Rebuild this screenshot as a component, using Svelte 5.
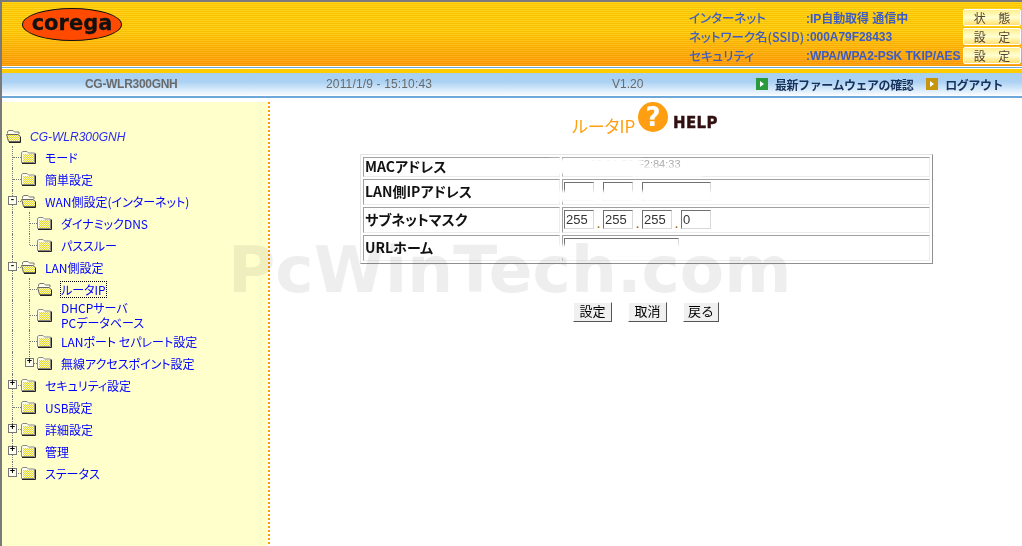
<script>
  const rows = [
    { lv: -1, label: 'CG-WLR300GNH', open: true, root: true },
    { lv: 0, label: 'モード' },
    { lv: 0, label: '簡単設定' },
    { lv: 0, label: 'WAN側設定(インターネット)', box: '-', open: true },
    { lv: 1, label: 'ダイナミックDNS' },
    { lv: 1, label: 'パススルー', lastInGroup: true },
    { lv: 0, label: 'LAN側設定', box: '-', open: true },
    { lv: 1, label: 'ルータIP', open: true, sel: true },
    { lv: 1, label: 'DHCPサーバ\nPCデータベース', tall: true },
    { lv: 1, label: 'LANポート セパレート設定' },
    { lv: 1, label: '無線アクセスポイント設定', box: '+', lastInGroup: true },
    { lv: 0, label: 'セキュリティ設定', box: '+' },
    { lv: 0, label: 'USB設定' },
    { lv: 0, label: '詳細設定', box: '+' },
    { lv: 0, label: '管理', box: '+' },
    { lv: 0, label: 'ステータス', box: '+', last: true }
  ];
  const status = [
    ['インターネット', ':IP自動取得 通信中', '状 態'],
    ['ネットワーク名(SSID)', ':000A79F28433', '設 定'],
    ['セキュリティ', ':WPA/WPA2-PSK TKIP/AES', '設 定']
  ];
</script>

<svg class="defs" width="0" height="0" aria-hidden="true">
  <defs>
    <pattern id="dither" width="2" height="2" patternUnits="userSpaceOnUse">
      <rect width="2" height="2" fill="#fdfbc0" />
      <rect width="1" height="1" fill="#e4d830" />
      <rect x="1" y="1" width="1" height="1" fill="#e4d830" />
    </pattern>
  </defs>
</svg>

<div class="page">
  <header class="head">
    <div class="logo"><span>corega</span></div>
    <div class="status">
      {#each status as s}
        <div class="stat-row">
          <span class="k">{s[0]}</span>
          <span class="v">{s[1]}</span>
          <span class="sbtn">{s[2]}</span>
        </div>
      {/each}
    </div>
  </header>
  <div class="rule"></div>
  <div class="bar">
    <span class="model">CG-WLR300GNH</span>
    <span class="date">2011/1/9 - 15:10:43</span>
    <span class="ver">V1.20</span>
    <span class="link first"><i class="arrow green"></i>最新ファームウェアの確認</span>
    <span class="link"><i class="arrow gold"></i>ログアウト</span>
  </div>
  <div class="bar-end"></div>

  <div class="body">
    <aside class="side">
      {#each rows as r}
        <div class="row" class:tall={r.tall} class:rootrow={r.root}>
          {#if r.lv === 0}
            <span class="conn" class:half={r.last}>
              {#if r.box}<b class="box">{r.box}</b>{/if}
            </span>
          {/if}
          {#if r.lv === 1}
            <span class="trunk"></span>
            <span class="conn sub" class:half={r.lastInGroup}>
              {#if r.box}<b class="box">{r.box}</b>{/if}
            </span>
          {/if}
          <svg class="folder" width="15" height="14" viewBox="0 0 15 14">
            {#if r.open}
              <path d="M1.5 4.5V2.5L3 1.5H7L8.5 3H13V5" fill="#fffff0" stroke="#777" />
              <path d="M2.5 12.5L.6 5.5H12L14.5 7.5V12.5Z" fill="url(#dither)" stroke="#666" />
              <path d="M3 13.5H14.5V8" fill="none" stroke="#222" />
            {:else}
              <path d="M.5 12.5V2.5L2 1.5H6L7.5 3H13.5V12.5Z" fill="#fffff0" stroke="#888" />
              <rect x="2" y="4" width="11" height="8" fill="url(#dither)" />
              <path d="M1 13.5H14.5V3.5" fill="none" stroke="#222" />
            {/if}
          </svg>
          <span class="label" class:root={r.root} class:sel={r.sel}>{r.label}</span>
        </div>
      {/each}
    </aside>

    <main class="main">
      <div class="title">
        <span class="ttl">ルータIP</span>
        <span class="q">?</span>
        <span class="help">HELP</span>
      </div>
      <table class="tbl">
        <tbody>
          <tr class="r1">
            <th>MACアドレス</th>
            <td><span class="mac">00:0A:79:F2:84:33</span></td>
          </tr>
          <tr class="r2">
            <th>LAN側IPアドレス</th>
            <td>
              <div class="ips">
                <span class="ip"></span><i>.</i><span class="ip"></span><i>.</i><span class="ip wide"></span>
              </div>
            </td>
          </tr>
          <tr class="r3">
            <th>サブネットマスク</th>
            <td>
              <div class="ips">
                <span class="ip">255</span><i>.</i><span class="ip">255</span><i>.</i><span class="ip">255</span><i>.</i><span class="ip">0</span>
              </div>
            </td>
          </tr>
          <tr class="r4">
            <th>URLホーム</th>
            <td><span class="ip url"></span></td>
          </tr>
        </tbody>
      </table>
      <div class="actions">
        <button>設定</button>
        <button>取消</button>
        <button class="narrow">戻る</button>
      </div>
    </main>
  </div>

  <div class="blot b1"></div>
  <div class="blot b1b"></div>
  <div class="blot b2"></div>
  <div class="blot b3"></div>
  <div class="watermark">PcWinTech.com</div>
</div>

<style>
  :global(body) { margin: 0; background: #fff; }
  .defs { position: absolute; }
  .page {
    position: relative;
    width: 1022px;
    height: 546px;
    overflow: hidden;
    box-sizing: border-box;
    border-top: 2px solid #7a7a7a;
    border-left: 2px solid #7a7a7a;
    font-family: "Noto Sans CJK JP", "Liberation Sans", sans-serif;
    font-feature-settings: "palt";
  }
  .head {
    height: 64px;
    display: flex;
    justify-content: space-between;
    align-items: flex-start;
    background:
      repeating-linear-gradient(180deg, rgba(255,255,255,.10) 0 1px, rgba(200,110,0,.12) 1px 2px),
      linear-gradient(180deg, #ffd000 0%, #ffcb00 45%, #ff9a00 100%);
  }
  .logo {
    margin: 6px 0 0 20px;
    width: 100px;
    height: 33px;
    box-sizing: border-box;
    background: #ff4a00;
    border: 1.5px solid #111;
    border-radius: 50%;
    display: flex;
    align-items: center;
    justify-content: center;
  }
  .logo span {
    font: bold 21px/1 "DejaVu Sans", sans-serif;
    color: #111;
    margin-top: -2px;
    -webkit-text-stroke: .3px #111;
  }
  .status { padding: 7px 1px 0 0; display: flex; flex-direction: column; gap: 2px; }
  .stat-row { display: flex; align-items: center; height: 17px; }
  .k, .v { font-size: 12.5px; font-weight: 500; color: #3d5cc4; white-space: nowrap; }
  .k { width: 117px; }
  .v { width: 157px; font-family: "Liberation Sans", "Noto Sans CJK JP", sans-serif; font-size: 12px; font-weight: 700; letter-spacing: -.05px; }
  .sbtn {
    width: 58px;
    height: 17px;
    box-sizing: border-box;
    background: linear-gradient(180deg, #ffee90, #ffffd0 50%, #ffe070);
    border: 1px solid #fff;
    border-radius: 2px;
    font-size: 12px;
    line-height: 15px;
    color: #554433;
    text-align: center;
    word-spacing: 10px;
  }
  .rule {
    height: 7px;
    background: linear-gradient(180deg, #fff 0 1px, #6ea8d8 1px 2px, #fff 2px 3px, #ffcc00 3px 100%);
  }
  .bar {
    height: 22px;
    display: flex;
    align-items: center;
    background: linear-gradient(180deg, #a6cff2 0%, #abd2f3 40%, #f6faff 100%);
    font: 700 12px "Liberation Sans", sans-serif;
    color: #6a6a6a;
    white-space: nowrap;
  }
  .model { margin-left: 83px; width: 241px; letter-spacing: -.3px; }
  .date { font-weight: 400; width: 286px; letter-spacing: .15px; }
  .ver { font-weight: 400; width: 144px; }
  .link {
    display: flex;
    align-items: center;
    gap: 7px;
    font-family: "Noto Sans CJK JP", sans-serif;
    color: #16305a;
    font-size: 12px;
    font-weight: 700;
    letter-spacing: -.45px;
    margin-left: 13px;
  }
  .link.first { margin-left: 0; }
  .arrow { display: inline-block; width: 12px; height: 12px; position: relative; }
  .green { background: #2a9a3c; }
  .gold { background: #c8960c; }
  .arrow::after {
    content: "";
    position: absolute;
    left: 4px; top: 3px;
    border: 3px solid transparent;
    border-left: 4px solid #fff;
    border-right: 0;
  }
  .bar-end {
    height: 7px;
    background: linear-gradient(180deg, #fff 0 1px, #6ea8d8 1px 3px, #fff 3px);
  }
  .body { display: flex; height: 444px; }
  .side {
    width: 268px;
    box-sizing: border-box;
    background:
      repeating-linear-gradient(180deg, #ff9a00 0 2px, #fff 2px 4px) right top / 2px 100% no-repeat,
      #ffffcc;
    padding: 23px 0 0 4px;
    font-size: 12px;
    color: #0000ff;
  }
  .row { display: flex; align-items: center; height: 22px; }
  .row.rootrow { height: 21px; }
  .row.tall { height: 30px; }
  .conn, .trunk {
    position: relative;
    width: 15px;
    align-self: stretch;
    flex: none;
  }
  .trunk::before, .conn::before {
    content: "";
    position: absolute;
    left: 6px; top: 0; bottom: 0;
    border-left: 1px dotted #777;
  }
  .conn::after {
    content: "";
    position: absolute;
    left: 7px; right: 0; top: 50%;
    border-top: 1px dotted #777;
  }
  .conn.half::before { bottom: 50%; }
  .conn.sub { width: 16px; }
  .conn.sub::before { left: 8px; }
  .conn.sub::after { left: 9px; }
  .conn.sub .box { left: 4px; }
  .box {
    position: absolute;
    left: 2px; top: 50%;
    margin-top: -5px;
    width: 9px; height: 9px;
    box-sizing: border-box;
    border: 1px solid #777;
    background: #ffffee;
    font: 700 9px/7px "Liberation Mono", monospace;
    color: #000;
    text-align: center;
    z-index: 1;
  }
  .folder { flex: none; }
  .label {
    margin-left: 9px;
    white-space: pre-line;
    line-height: 15px;
  }
  .label.root {
    font: italic 12px "Liberation Sans", sans-serif;
    color: #2a2aee;
    margin-top: 3px;
  }
  .label.sel { outline: 1px dotted #000; }

  .main { flex: 1; display: flex; flex-direction: column; align-items: flex-start; padding-left: 90px; }
  .title { display: flex; align-items: flex-start; margin: 0 0 0 212px; height: 52px; }
  .ttl { color: #ff9e10; font-size: 17px; line-height: 22px; margin-top: 13px; width: 66px; font-weight: 400; }
  .q {
    width: 30px; height: 30px;
    border-radius: 50%;
    background: #ff9e10;
    color: #fff;
    font: 700 26px/30px "DejaVu Sans", sans-serif;
    text-align: center;
  }
  .help {
    margin: 11px 0 0 5px;
    font: 700 15px/20px "DejaVu Sans", sans-serif;
    letter-spacing: .4px;
    color: #301010;
    -webkit-text-stroke: .4px #301010;
  }
  .tbl {
    width: 573px;
    height: 110px;
    box-sizing: border-box;
    border-collapse: separate;
    border-spacing: 2px;
    border: 1px solid;
    border-color: #e4e4e4 #909090 #909090 #e4e4e4;
  }
  .tbl th, .tbl td {
    padding: 0 1px;
    border: 1px solid;
    border-color: #a0a0a0 #ececec #ececec #a0a0a0;
    vertical-align: middle;
    text-align: left;
    line-height: 16px;
  }
  .tbl th {
    width: 193px;
    padding-bottom: 2px;
    font-size: 14px;
    font-weight: 700;
    color: #111;
    white-space: nowrap;
  }
  .tbl td { padding-bottom: 1px; }
  .r1 { height: 20px; }
  .r2, .r3, .r4 { height: 26px; }
  .mac { font: 11px/10px "Liberation Sans", sans-serif; color: #aaa; padding-left: 26px; display: block; margin-top: -5px; }
  .ips { display: flex; align-items: flex-end; }
  .ips i { width: 9px; text-align: center; font: 700 11px/10px "Liberation Sans", sans-serif; color: #a06a10; }
  .ip {
    display: block;
    width: 30px;
    height: 19px;
    box-sizing: border-box;
    border: 1px solid;
    border-color: #707070 #d8d8d8 #d8d8d8 #707070;
    background: #fff;
    font: 13px/17px "Liberation Sans", sans-serif;
    color: #333;
    padding-left: 1px;
  }
  .ip.wide { width: 69px; }
  .ip.url { width: 115px; }
  .actions { display: flex; margin: 38px 0 0 213px; gap: 16px; }
  button {
    width: 39px;
    height: 20px;
    padding: 0 0 2px;
    box-sizing: border-box;
    border: 1px solid;
    border-color: #fff #555 #555 #fff;
    background: #f0f0f0;
    font: 13px/16px "Noto Sans CJK JP", sans-serif;
    color: #000;
  }
  button.narrow { width: 36px; }

  .blot { position: absolute; background: #fff; filter: blur(1.5px); }
  .b1 { left: 548px; top: 157px; width: 92px; height: 15px; }
  .b1b { left: 630px; top: 165px; width: 70px; height: 10px; }
  .b2 { left: 556px; top: 189px; width: 155px; height: 11px; }
  .b3 { left: 553px; top: 243px; width: 126px; height: 14px; }

  .watermark {
    position: absolute;
    left: 226px;
    top: 228px;
    font: 700 64.5px/80px "DejaVu Sans", sans-serif;
    letter-spacing: .1px;
    color: #eeeeee;
    mix-blend-mode: multiply;
    pointer-events: none;
    white-space: nowrap;
  }
</style>
